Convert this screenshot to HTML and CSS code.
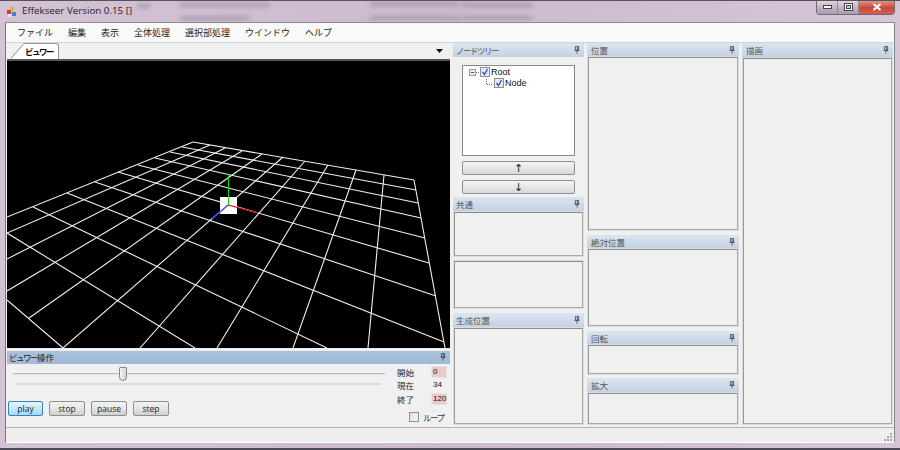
FILE: index.html
```html
<!DOCTYPE html>
<html lang="ja">
<head>
    <meta charset="UTF-8">
    <title>Effekseer Version 0.15 []</title>
    <link rel="stylesheet" href="styles.css">
</head>
<body>
    <svg class="defs" width="0" height="0">
        <symbol id="pin" viewBox="0 0 7 10">
            <path d="M1.500 .5h4v5h-4zM4 1v4.500M.5 5.500h6M3.500 5.500v4" fill="none" stroke="#444" stroke-width="1"/>
        </symbol>
        <symbol id="check" viewBox="0 0 10 10">
            <rect x=".5" y=".5" width="9" height="9" fill="#e6e9f0" stroke="#8e8f8f"/>
            <path d="M2.500 5l2 2.500 3-5.500" fill="none" stroke="#3050e0" stroke-width="1.300"/>
        </symbol>
    </svg>
    <div class="window">
        <div class="smudges">
            <span class="smudge s1"></span>
            <span class="smudge s2"></span>
            <span class="smudge s3"></span>
            <span class="smudge s4"></span>
            <span class="smudge s5"></span>
            <span class="smudge s6"></span>
            <span class="smudge s7"></span>
        </div>
        <div class="titlebar">
            <svg class="appicon" width="10" height="10" viewBox="0 0 10 10">
                <rect x="3" y="0" width="4" height="4" fill="#e8b030"/>
                <rect x="0" y="3" width="4" height="4" fill="#d04030"/>
                <rect x="5" y="5" width="4" height="4" fill="#4a80d0"/>
                <rect x="1" y="7" width="3" height="3" fill="#e8e8e8"/>
            </svg>
            <span class="title">Effekseer Version 0.15 []</span>
            <div class="winbtns">
                <div class="winbtn">
                    <svg width="9" height="4" viewBox="0 0 9 4"><rect x=".5" y=".5" width="8" height="3" fill="#fff" stroke="#444"/></svg>
                </div>
                <div class="winbtn">
                    <svg width="9" height="8" viewBox="0 0 9 8"><rect x=".5" y=".5" width="8" height="7" fill="#fff" stroke="#444"/><rect x="2.500" y="2.500" width="4" height="3" fill="#cfcfd8" stroke="#444"/></svg>
                </div>
                <div class="winbtn close">
                    <svg width="10" height="8" viewBox="0 0 10 8"><path d="M1.500 1l7 6M8.500 1l-7 6" stroke="#fff" stroke-width="2.200"/></svg>
                </div>
            </div>
        </div>
        <div class="client">
            <div class="menubar">
                <span class="menu-item">ファイル</span>
                <span class="menu-item">編集</span>
                <span class="menu-item">表示</span>
                <span class="menu-item">全体処理</span>
                <span class="menu-item">選択部処理</span>
                <span class="menu-item">ウインドウ</span>
                <span class="menu-item">ヘルプ</span>
            </div>
            <div class="main">
                <div class="viewer-col">
                    <div class="tabstrip">
                        <svg class="tab-slant" width="13" height="16" viewBox="0 0 13 16">
                            <path d="M0 16L13 1V16z" fill="#fff"/>
                            <path d="M0 15.500L13 .5" fill="none" stroke="#8c8c8c"/>
                        </svg>
                        <div class="tab">ビュワー</div>
                        <svg class="tab-arrow" width="7" height="4" viewBox="0 0 7 4"><path d="M0 0h7L3.500 4z" fill="#111"/></svg>
                    </div>
                    <svg class="viewport" width="443" height="287" viewBox="7 61 443 287">
                        <g class="grid">
                            <path d="M193 142L414 180M182 147L416 190M170 152L418 203M155 158L421 218M138 165L425 238M118 172L429 263M95 182L436 296M67 193L444 342M33 207L327 348M7 233L195 348M7 300L63 348"/>
                            <path d="M193 142L7 217M210 145L7 233M225 148L7 259M242 151L7 291M262 154L29 318M283 157L63 348M305 161L140 348M328 165L217 348M356 170L293 348M384 175L368 348M414 180L445 348"/>
                        </g>
                        <rect x="220" y="197" width="17" height="17" fill="#fff"/>
                        <path d="M228 205L212 219" stroke="#3030ff" stroke-width="1.200"/>
                        <path d="M228 205L258 213" stroke="#e00000" stroke-width="1.200"/>
                        <path d="M228.500 174V205" stroke="#00e000"/>
                    </svg>
                    <div class="dock-head active"><span><span class="kana">ビュワー</span>操作</span><svg class="pin"><use href="#pin"/></svg></div>
                    <div class="controls">
                        <div class="ctl-left">
                            <div class="slider"><span class="thumb"></span></div>
                            <div class="ticks"></div>
                            <div class="btnrow">
                                <span class="btn on">play</span>
                                <span class="btn">stop</span>
                                <span class="btn">pause</span>
                                <span class="btn">step</span>
                            </div>
                        </div>
                        <div class="ctl-right">
                            <div class="frame-row"><span>開始</span><span class="num pink">0</span></div>
                            <div class="frame-row"><span>現在</span><span class="num">34</span></div>
                            <div class="frame-row"><span>終了</span><span class="num pink">120</span></div>
                            <div class="loop"><span class="box"></span><span class="kana">ループ</span></div>
                        </div>
                    </div>
                </div>

                <div class="col col2">
                    <div class="dock-head"><span class="kana">ノードツリー</span><svg class="pin"><use href="#pin"/></svg></div>
                    <div class="tree-area">
                        <div class="tree">
                            <div class="tree-row">
                                <svg class="expander" width="10" height="7" viewBox="0 0 10 7"><rect x=".5" y=".5" width="6" height="6" fill="#eee" stroke="#999"/><path d="M2 3.500h3" stroke="#555"/><path d="M7 3.500h3" stroke="#777" stroke-dasharray="1 1"/></svg>
                                <svg class="chk"><use href="#check"/></svg>
                                <span>Root</span>
                            </div>
                            <div class="tree-row child">
                                <svg class="branch" width="8" height="8" viewBox="0 0 8 8"><path d="M1.500 0v5.500H8" fill="none" stroke="#666" stroke-dasharray="1 1"/></svg>
                                <svg class="chk"><use href="#check"/></svg>
                                <span>Node</span>
                            </div>
                        </div>
                        <div class="arrow-btn">↑</div>
                        <div class="arrow-btn">↓</div>
                    </div>
                    <div class="dock-head"><span>共通</span><svg class="pin"><use href="#pin"/></svg></div>
                    <div class="box-panel h-common"></div>
                    <div class="box-panel h-extra"></div>
                    <div class="dock-head gap"><span>生成位置</span><svg class="pin"><use href="#pin"/></svg></div>
                    <div class="box-panel grow"></div>
                </div>

                <div class="col col3">
                    <div class="dock-head"><span>位置</span><svg class="pin"><use href="#pin"/></svg></div>
                    <div class="box-panel h-pos"></div>
                    <div class="dock-head gap"><span>絶対位置</span><svg class="pin"><use href="#pin"/></svg></div>
                    <div class="box-panel h-abs"></div>
                    <div class="dock-head gap"><span>回転</span><svg class="pin"><use href="#pin"/></svg></div>
                    <div class="box-panel h-rot"></div>
                    <div class="dock-head gap-small"><span>拡大</span><svg class="pin"><use href="#pin"/></svg></div>
                    <div class="box-panel grow"></div>
                </div>

                <div class="col col4">
                    <div class="dock-head"><span>描画</span><svg class="pin"><use href="#pin"/></svg></div>
                    <div class="box-panel grow"></div>
                </div>
            </div>
            <div class="statusbar">
                <svg width="9" height="9" viewBox="0 0 9 9"><path d="M6 0h2v2H6zM3 3h2v2H3zM6 3h2v2H6zM0 6h2v2H0zM3 6h2v2H3zM6 6h2v2H6z" fill="#a8a8a8"/></svg>
            </div>
        </div>
    </div>
</body>
</html>
```

FILE: styles.css
```css
* { box-sizing: border-box; }

body {
    margin: 0;
    font-family: "Noto Sans CJK JP", "Noto Sans", sans-serif;
    font-size: 9px;
    color: #333;
}

.defs { position: absolute; }

.kana { letter-spacing: -1.500px; }

.window {
    position: relative;
    width: 900px;
    height: 450px;
    overflow: hidden;
    display: flex;
    flex-direction: column;
    background: linear-gradient(90deg, #d3c3d4 0%, #cdb9cf 50%, #d6c4d7 100%);
    border-top: 1px solid #555;
    border-bottom: 2px solid #4a4a58;
}

/* blurred page behind the glass frame */
.smudges { position: absolute; inset: 0; height: 22px; }
.smudge { position: absolute; height: 4px; background: #a99cae; filter: blur(2px); }
.s1 { left: 138px; top: 3px; width: 12px; }
.s2 { left: 180px; top: 2px; width: 90px; }
.s3 { left: 180px; top: 15px; width: 70px; }
.s4 { left: 370px; top: 1px; width: 90px; }
.s5 { left: 370px; top: 15px; width: 90px; }
.s6 { left: 462px; top: 2px; width: 70px; }
.s7 { left: 462px; top: 15px; width: 70px; }

.titlebar {
    position: relative;
    display: flex;
    align-items: flex-start;
    height: 21px;
    padding-left: 7px;
    flex-shrink: 0;
}

.appicon { margin-top: 6px; }

.title {
    margin: 3px 0 0 5px;
    font-family: "Open Sans", sans-serif;
    font-size: 9.800px;
    line-height: 14px;
    color: #222;
}

.winbtns {
    display: flex;
    margin-left: auto;
    margin-right: 5px;
    height: 15px;
    margin-top: -1px;
    border: 1px solid #6e6a76;
    border-top: 0;
    border-radius: 0 0 4px 4px;
    overflow: hidden;
}

.winbtn {
    width: 21px;
    display: flex;
    align-items: center;
    justify-content: center;
    border-right: 1px solid #8f8b98;
    background: linear-gradient(#e6dbe6, #c4b6c6 50%, #a99bac);
}

.winbtn.close {
    width: 35px;
    border-right: 0;
    background: linear-gradient(#e0a090, #c8493a 55%, #d2604c);
}

.client {
    display: flex;
    flex-direction: column;
    margin-left: 5px;
    width: 890px;
    height: 421px;
    background: #f0f0f0;
    border: 1px solid #fff;
    border-top-color: #8b8b8b;
    border-left-color: #777;
    border-right-color: #888;
    border-bottom-color: #fff;
}

.menubar {
    display: flex;
    height: 20px;
    flex-shrink: 0;
    align-items: center;
    padding-left: 11px;
    gap: 15px;
    background: #f9f9f9;
    border-bottom: 1px solid #d4d4d4;
    font-size: 9px;
    color: #222;
}

.main {
    display: flex;
    height: 385px;
    flex-shrink: 0;
    padding-left: 1px;
    border-bottom: 1px solid #b4b4b4;
}

.viewer-col {
    display: flex;
    flex-direction: column;
    width: 443px;
}

.tabstrip {
    display: flex;
    align-items: flex-end;
    height: 18px;
    padding-left: 4px;
    border-bottom: 2px solid #555;
}

.tab-slant { display: block; }

.tab {
    width: 35px;
    height: 16px;
    padding-left: 1px;
    background: #fff;
    border: 1px solid #9a9a9a;
    border-left: 0;
    border-bottom: 0;
    border-radius: 0 3px 0 0;
    font-size: 8.500px;
    font-weight: 700;
    letter-spacing: -1.500px;
    line-height: 14px;
    color: #111;
}

.tab-arrow { margin: 0 7px 6px auto; }

.viewport { display: block; background: #000; flex-shrink: 0; }

.grid path {
    fill: none;
    stroke: #f0f0f0;
    stroke-width: 1.100;
}

.dock-head {
    display: flex;
    align-items: center;
    justify-content: space-between;
    height: 14px;
    padding: 0 4px 1px 3px;
    flex-shrink: 0;
    background: linear-gradient(#d9e5f1, #c3d2e2);
    font-size: 8.500px;
    color: #555;
}

.col3 .dock-head, .col4 .dock-head { padding-left: 4px; }

.dock-head.active {
    margin-top: 3px;
    height: 13px;
    padding-left: 2px;
    background: linear-gradient(#a9c1db, #a0b9d6);
    color: #222;
}

.dock-head.gap { margin-top: 5px; }
.dock-head.gap-small { margin-top: 4px; }

.pin { width: 6px; height: 8px; }

.controls {
    display: flex;
    flex: 1;
}

.ctl-left {
    width: 377px;
    margin-left: 1px;
}

.slider {
    position: relative;
    height: 2px;
    margin: 9px 0 0 5px;
    background: #b8b8b8;
    border-bottom: 1px solid #e4e4e4;
}

.thumb {
    position: absolute;
    left: 106px;
    top: -6px;
    width: 8px;
    height: 14px;
    background: linear-gradient(90deg, #f4f4f4, #d4d4d4);
    border: 1px solid #8a8a8a;
    border-radius: 1px 1px 4px 4px;
}

.ticks {
    height: 2px;
    margin: 8px 4px 0 8px;
    background: repeating-linear-gradient(90deg, #c8c8c8 0 1px, transparent 1px 2px);
}

.btnrow {
    display: flex;
    gap: 6px;
    margin-top: 16px;
}

.btn {
    width: 36px;
    height: 15px;
    display: flex;
    align-items: center;
    justify-content: center;
    background: linear-gradient(#f2f2f2 0%, #e6e6e6 50%, #cfcfcf 100%);
    border: 1px solid #8e8f8f;
    border-radius: 2px;
    font-family: "Open Sans", sans-serif;
    font-size: 8.500px;
    color: #222;
}

.btn.on {
    width: 35px;
    background: linear-gradient(#e6f5fc 0%, #c6e8f9 50%, #a3d9f5 100%);
    border-color: #3c7fb1;
}

.ctl-right {
    width: 50px;
    margin-left: 12px;
    padding-top: 1px;
}

.frame-row {
    display: flex;
    align-items: center;
    justify-content: space-between;
    height: 13.500px;
    font-size: 8.500px;
    color: #222;
}

.num {
    width: 16px;
    height: 12px;
    padding: 0 2px;
    line-height: 12px;
    font-family: "Liberation Sans", sans-serif;
    font-size: 8px;
    text-align: left;
    color: #111;
}

.num.pink {
    background: #eccaca;
    border: 1px solid #e8e4e4;
    padding: 0 1px;
    line-height: 10px;
}

.loop {
    display: flex;
    align-items: center;
    gap: 4px;
    margin: 5px 0 0 12px;
    font-size: 8.500px;
    white-space: nowrap;
}

.box {
    width: 10px;
    height: 10px;
    background: linear-gradient(135deg, #ddd, #f8f8f8);
    border: 1px solid #8e8f8f;
}

.col {
    display: flex;
    flex-direction: column;
    padding-bottom: 3px;
}

.col2 { width: 131px; margin-left: 3px; }
.col3 { width: 152px; margin-left: 3px; }
.col4 { width: 151px; margin-left: 3px; }

.box-panel {
    margin: 0 1px;
    background: #f0f0f0;
    border: 1px solid #a8a8a8;
    border-top-color: #8c8c8c;
    border-left-color: #999;
    box-shadow: 0 0 0 1px #dcdcdc;
    flex-shrink: 0;
}

.box-panel.grow { flex: 1; margin-top: 1px; }

.h-common { height: 44px; margin-top: 1px; }
.h-extra { height: 47px; margin-top: 5px; }
.h-pos { height: 173px; }
.h-abs { height: 77px; }
.h-rot { height: 29px; }

.tree-area {
    height: 140px;
    padding: 8px 9px 0;
    flex-shrink: 0;
}

.tree {
    height: 91px;
    padding: 1px 6px;
    background: #fff;
    border: 1px solid #888;
    font-family: "Liberation Sans", sans-serif;
    font-size: 9px;
    color: #111;
}

.tree-row {
    display: flex;
    align-items: center;
    height: 10.500px;
    gap: 1px;
}

.tree-row.child { padding-left: 16px; gap: 1px; }

.chk { width: 10px; height: 10px; }

.arrow-btn {
    height: 14px;
    margin-top: 5px;
    display: flex;
    align-items: center;
    justify-content: center;
    background: linear-gradient(#f4f4f4, #d8d8d8);
    border: 1px solid #8e8f8f;
    border-radius: 2px;
    font-family: "DejaVu Sans", sans-serif;
    font-size: 11px;
    color: #222;
}

.statusbar {
    display: flex;
    flex: 1;
    align-items: flex-end;
    justify-content: flex-end;
    padding-right: 1px;
    background: #f0eded;
}
```
